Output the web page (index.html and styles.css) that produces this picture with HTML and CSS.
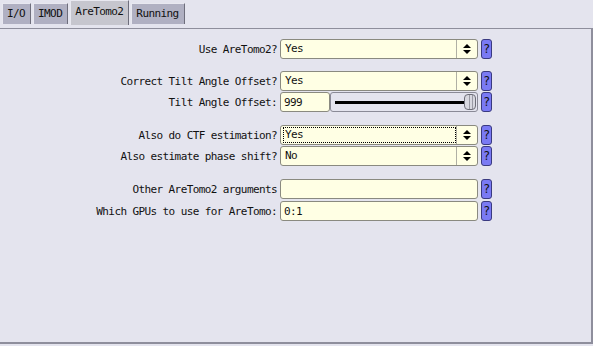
FILE: index.html
```html
<!DOCTYPE html>
<html lang="en">
<head>
    <meta charset="UTF-8">
    <title>AreTomo2</title>
    <link rel="stylesheet" href="styles.css">
</head>
<body>
    <div class="tabs">
        <div class="tab">I/O</div>
        <div class="tab">IMOD</div>
        <div class="tab active">AreTomo2</div>
        <div class="tab">Running</div>
    </div>
    <div class="panel">
        <div class="group">
            <div class="row">
                <label>Use AreTomo2?</label>
                <div class="choice"><span class="value">Yes</span><span class="arrows"></span></div>
                <div class="help">?</div>
            </div>
        </div>
        <div class="group">
            <div class="row">
                <label>Correct Tilt Angle Offset?</label>
                <div class="choice"><span class="value">Yes</span><span class="arrows"></span></div>
                <div class="help">?</div>
            </div>
            <div class="row">
                <label>Tilt Angle Offset:</label>
                <div class="slider-box">
                    <div class="field short">999</div>
                    <div class="slider"><div class="track"></div><div class="knob"></div></div>
                </div>
                <div class="help">?</div>
            </div>
        </div>
        <div class="group">
            <div class="row">
                <label>Also do CTF estimation?</label>
                <div class="choice"><span class="value focus">Yes</span><span class="arrows"></span></div>
                <div class="help">?</div>
            </div>
            <div class="row">
                <label>Also estimate phase shift?</label>
                <div class="choice"><span class="value">No</span><span class="arrows"></span></div>
                <div class="help">?</div>
            </div>
        </div>
        <div class="group last">
            <div class="row">
                <label>Other AreTomo2 arguments</label>
                <div class="field"></div>
                <div class="help">?</div>
            </div>
            <div class="row">
                <label>Which GPUs to use for AreTomo:</label>
                <div class="field">0:1</div>
                <div class="help">?</div>
            </div>
        </div>
    </div>
</body>
</html>
```

FILE: styles.css
```css
body {
    margin: 0;
    background-color: #e4e4ee;
    font-family: "DejaVu Sans Mono", monospace;
    font-size: 11px;
    letter-spacing: -0.6px;
    color: #111;
    width: 593px;
    height: 346px;
    overflow: hidden;
}
.tabs {
    display: flex;
    align-items: flex-start;
    gap: 2px;
    height: 29px;
    padding-left: 2px;
    border-bottom: 1px solid #8e8e9c;
    box-sizing: border-box;
}
.tab {
    height: 21px;
    line-height: 20px;
    margin-top: 3px;
    padding: 0 5px 0 4px;
    background-color: #b0b0c2;
    border-top: 1px solid #e8e8f0;
    border-left: 1px solid #e8e8f0;
    border-right: 1px solid #6e6e7c;
    box-sizing: border-box;
}
.tab.active {
    height: 25px;
    margin-top: 0;
    line-height: 22px;
    background-color: #c6c6ce;
}
.panel {
    height: 315px;
    padding-top: 10px;
    border-right: 2px solid #8e8e9c;
    border-bottom: 2px solid #8e8e9c;
    box-sizing: border-box;
    width: 593px;
}
.group {
    display: flex;
    flex-direction: column;
    gap: 1px;
    margin-bottom: 13px;
}
.group:first-child {
    margin-bottom: 12px;
}
.group.last {
    gap: 2px;
}
.row {
    display: grid;
    grid-template-columns: 277px 198px 11px;
    column-gap: 3px;
    height: 20px;
    align-items: center;
}
label {
    text-align: right;
}
.choice, .field {
    height: 20px;
    box-sizing: border-box;
    background-color: #ffffe4;
    border: 1px solid #8a8a80;
    border-radius: 3px;
    display: flex;
    align-items: center;
}
.field {
    padding-left: 3px;
}
.value {
    flex: 1;
    height: 14px;
    line-height: 14px;
    margin-left: 2px;
    padding-left: 1px;
    border: 1px dotted transparent;
}
.value.focus {
    border-color: #000;
}
.arrows {
    width: 20px;
    height: 18px;
    border-left: 1px solid #b0b0a4;
    position: relative;
}
.arrows::before, .arrows::after {
    content: "";
    position: absolute;
    left: 6px;
    border-left: 4px solid transparent;
    border-right: 4px solid transparent;
}
.arrows::before {
    top: 4px;
    border-bottom: 4px solid #000;
}
.arrows::after {
    top: 10px;
    border-top: 4px solid #000;
}
.slider-box {
    display: flex;
    height: 20px;
}
.field.short {
    width: 50px;
    flex: none;
}
.slider {
    flex: 1;
    height: 20px;
    box-sizing: border-box;
    border: 1px solid #8a8a96;
    border-radius: 3px;
    background-color: #e4e4ee;
    display: flex;
    align-items: center;
    padding: 0 1px 0 4px;
}
.track {
    flex: 1;
    height: 3px;
    background-color: #000;
}
.knob {
    width: 12px;
    height: 16px;
    box-sizing: border-box;
    border: 1px solid #6e6e78;
    border-radius: 4px;
    background: linear-gradient(to right, #d8d8e0 0 4px, #9a9aa4 4px 5px, #d8d8e0 5px 7px, #9a9aa4 7px 8px, #d8d8e0 8px);
}
.help {
    height: 20px;
    box-sizing: border-box;
    background-color: #7a7af4;
    border: 1px solid #3a3a80;
    border-radius: 3px;
    text-align: center;
    line-height: 18px;
    font-size: 12px;
    letter-spacing: 0;
}
```
